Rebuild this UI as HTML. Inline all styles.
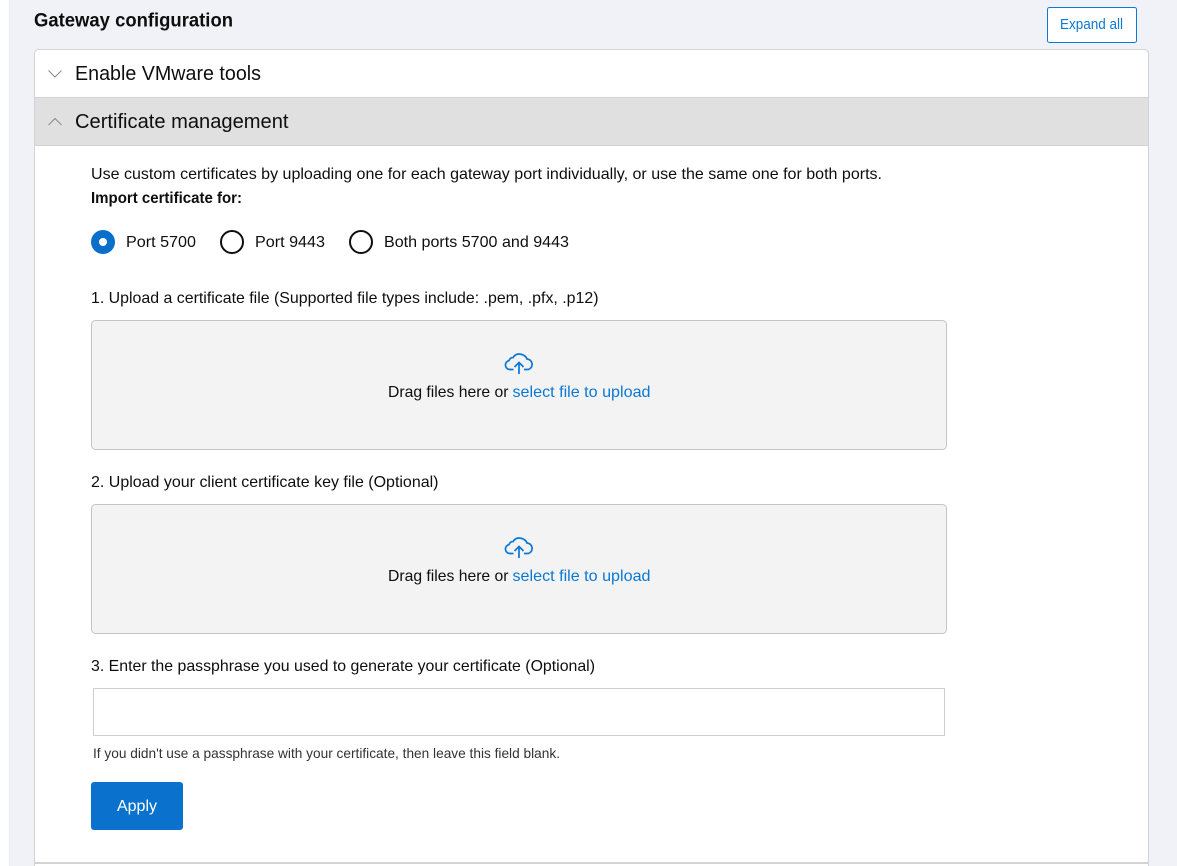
<!DOCTYPE html>
<html lang="en"><head><meta charset="utf-8"><title>Gateway configuration</title>
<style>
html,body{margin:0;padding:0;width:1177px;height:866px;overflow:hidden;background:#fff}
svg{display:block}
text{font-family:"Liberation Sans",sans-serif;fill:#0e0e0e;font-size:16px}
</style></head><body>
<svg width="1177" height="866" viewBox="0 0 1177 866" xmlns="http://www.w3.org/2000/svg">
<rect x="0" y="0" width="1177" height="866" fill="#fff"/>
<rect x="9" y="0" width="1168" height="866" fill="#f0f2f8"/>
<rect x="9" y="0" width="1" height="866" fill="#e6f0f8"/>

<text x="34" y="26.500" font-weight="bold" textLength="199" lengthAdjust="spacingAndGlyphs" style="font-size:19px">Gateway configuration</text>

<rect x="1047.500" y="7.500" width="89" height="35" rx="2" fill="#fff" stroke="#0a78d4"/>
<text x="1060" y="29" style="font-size:14.500px;fill:#0a78d4" textLength="63" lengthAdjust="spacingAndGlyphs">Expand all</text>

<path d="M34.500 866V53.500a4 4 0 0 1 4-4H1144.500a4 4 0 0 1 4 4V866" fill="#fff" stroke="#d3d3d6"/>
<rect x="35" y="97" width="1113" height="49" fill="#e0e0e0"/>
<rect x="35" y="97" width="1113" height="1" fill="#d3d3d6"/>
<rect x="35" y="145" width="1113" height="1" fill="#d3d3d6"/>
<rect x="35" y="862" width="1113" height="2" fill="#d3d3d6"/>

<path d="M48.500 70.500l6.500 6.500 6.500-6.500" fill="none" stroke="#8a8a8a" stroke-width="1"/>
<path d="M48.500 125l6.500-6.500 6.500 6.500" fill="none" stroke="#8a8a8a" stroke-width="1"/>
<text x="75" y="80" style="font-size:20.500px" textLength="186" lengthAdjust="spacingAndGlyphs">Enable VMware tools</text>
<text x="75" y="128" style="font-size:20.500px" textLength="213.500" lengthAdjust="spacingAndGlyphs">Certificate management</text>

<text x="91" y="179" textLength="791" lengthAdjust="spacingAndGlyphs">Use custom certificates by uploading one for each gateway port individually, or use the same one for both ports.</text>
<text x="91" y="203" font-weight="bold" textLength="151" lengthAdjust="spacingAndGlyphs">Import certificate for:</text>

<circle cx="103" cy="242" r="12" fill="#0a6fcb"/>
<circle cx="103" cy="242" r="4" fill="#fff"/>
<text x="126" y="247" textLength="70" lengthAdjust="spacingAndGlyphs">Port 5700</text>
<circle cx="232" cy="242" r="11" fill="#fff" stroke="#0e0e0e" stroke-width="2"/>
<text x="255" y="247" textLength="70" lengthAdjust="spacingAndGlyphs">Port 9443</text>
<circle cx="361" cy="242" r="11" fill="#fff" stroke="#0e0e0e" stroke-width="2"/>
<text x="384" y="247" textLength="185" lengthAdjust="spacingAndGlyphs">Both ports 5700 and 9443</text>

<text x="91" y="303" textLength="507.500" lengthAdjust="spacingAndGlyphs">1. Upload a certificate file (Supported file types include: .pem, .pfx, .p12)</text>

<rect x="91.500" y="320.500" width="855" height="129" rx="4" fill="#f3f3f3" stroke="#c4c4c4"/>
<path d="M513.500 369.500H510a4.500 4.500 0 0 1-1-8.900 4.500 4.500 0 0 1 4.200-3.100C514.500 355 516.500 354 519 354c3.500 0 7 2 8 5a5.400 5.400 0 0 1 1.500 10.500H524" fill="none" stroke="#0a78d4" stroke-width="1.700"/>
<path d="M519 374v-11M514.500 367l4.500-4.500 4.500 4.500" fill="none" stroke="#0a78d4" stroke-width="1.700"/>
<text x="388" y="397" textLength="120.500" lengthAdjust="spacingAndGlyphs">Drag files here or</text>
<text x="512.500" y="397" style="fill:#0a78d4" textLength="138" lengthAdjust="spacingAndGlyphs">select file to upload</text>

<text x="91" y="487" textLength="347.500" lengthAdjust="spacingAndGlyphs">2. Upload your client certificate key file (Optional)</text>

<rect x="91.500" y="504.500" width="855" height="129" rx="4" fill="#f3f3f3" stroke="#c4c4c4"/>
<path d="M513.500 553.500H510a4.500 4.500 0 0 1-1-8.900 4.500 4.500 0 0 1 4.200-3.100C514.500 539 516.500 538 519 538c3.500 0 7 2 8 5a5.400 5.400 0 0 1 1.500 10.500H524" fill="none" stroke="#0a78d4" stroke-width="1.700"/>
<path d="M519 558v-11M514.500 551l4.500-4.500 4.500 4.500" fill="none" stroke="#0a78d4" stroke-width="1.700"/>
<text x="388" y="581" textLength="120.500" lengthAdjust="spacingAndGlyphs">Drag files here or</text>
<text x="512.500" y="581" style="fill:#0a78d4" textLength="138" lengthAdjust="spacingAndGlyphs">select file to upload</text>

<text x="91" y="671" textLength="504" lengthAdjust="spacingAndGlyphs">3. Enter the passphrase you used to generate your certificate (Optional)</text>
<rect x="93.500" y="688.500" width="851" height="47" fill="#fff" stroke="#cfcfcf"/>
<text x="93" y="758" style="font-size:14px;fill:#333" textLength="467" lengthAdjust="spacingAndGlyphs">If you didn't use a passphrase with your certificate, then leave this field blank.</text>

<rect x="91" y="782" width="92" height="48" rx="3" fill="#0a72cd"/>
<text x="117" y="811" style="fill:#fff" textLength="40" lengthAdjust="spacingAndGlyphs">Apply</text>
</svg>
</body></html>
